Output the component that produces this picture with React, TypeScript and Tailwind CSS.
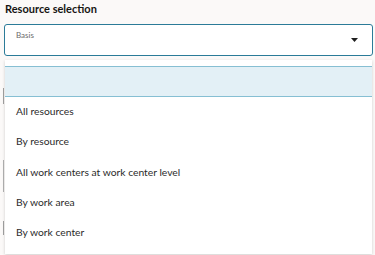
import React from "react";

const items = [
  "All resources",
  "By resource",
  "All work centers at work center level",
  "By work area",
  "By work center",
];

export default function App() {
  return (
    <div
      className="relative w-[375px] h-[255px] overflow-hidden bg-[#fbf9f8]"
      style={{ fontFamily: "Lato, 'Noto Sans', sans-serif" }}
    >
      <div className="flex flex-col">
        <div className="pl-[5px] pt-[1px] h-[24px] text-[11px] leading-[16px] font-bold text-[#161513]">
          Resource selection
        </div>
        <div className="ml-[4px] mr-[2px] h-[32px] rounded-[3px] border-[1.5px] border-[#2b7b98] bg-white flex items-start justify-between">
          <div className="pl-[11px] pt-[5px] text-[8px] leading-[10px] text-[#6b6b6b]">Basis</div>
          <svg className="mr-[14px] mt-[13px]" width="7" height="4" viewBox="0 0 7 4">
            <path d="M0 0 H7 L3.5 4 Z" fill="#1f1f1f" />
          </svg>
        </div>
      </div>
      <div className="absolute left-[3px] top-[88px] h-[16px] w-[1px] bg-[#a0a0a0]" />
      <div className="absolute left-[3px] top-[160px] h-[32px] w-[1px] bg-[#b0b0b0]" />
      <div className="absolute left-[3px] top-[221px] h-[14px] w-[1px] bg-[#a0a0a0]" />
      <div className="absolute left-[5px] right-[3px] top-[60px] h-[194px] bg-white shadow-[0_1px_3px_rgba(0,0,0,0.18)] py-[6px] flex flex-col">
        <div className="h-[31px] bg-[#e3f0f6] border-y-[1.5px] border-[#86bfd3]" />
        {items.map((t) => (
          <div
            key={t}
            className="h-[30.5px] flex items-center pl-[11px] text-[10.3px] text-[#2b2b2b]"
          >
            {t}
          </div>
        ))}
      </div>
    </div>
  );
}
